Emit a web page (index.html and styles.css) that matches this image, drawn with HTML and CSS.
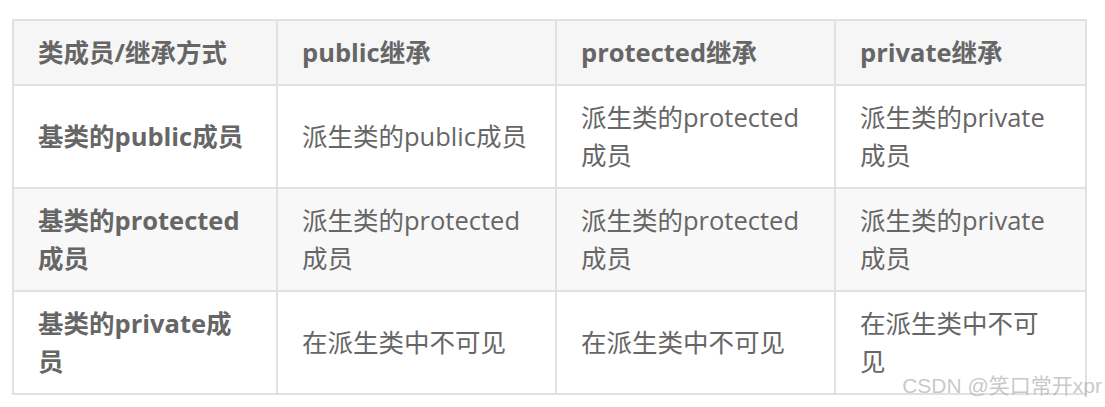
FILE: index.html
```html
<!DOCTYPE html>
<html lang="zh">
<head>
<meta charset="utf-8">
<link rel="stylesheet" href="styles.css">
</head>
<body>
<div class="page">
  <table class="grid">
    <colgroup>
      <col class="c1"><col class="c2"><col class="c3"><col class="c4">
    </colgroup>
    <thead>
      <tr><th>类成员/继承方式</th><th>public继承</th><th>protected继承</th><th>private继承</th></tr>
    </thead>
    <tbody>
      <tr><td class="key">基类的public成员</td><td>派生类的public成员</td><td>派生类的protected成员</td><td>派生类的private成员</td></tr>
      <tr class="alt"><td class="key">基类的protected成员</td><td>派生类的protected成员</td><td>派生类的protected成员</td><td>派生类的private成员</td></tr>
      <tr><td class="key">基类的private成员</td><td>在派生类中不可见</td><td>在派生类中不可见</td><td>在派生类中不可见</td></tr>
    </tbody>
  </table>
  <div class="mark">CSDN @笑口常开xpr</div>
</div>
</body>
</html>
```

FILE: styles.css
```css
html, body {
  margin: 0;
  padding: 0;
  background: #ffffff;
}
.page {
  position: relative;
  width: 1105px;
  height: 407px;
  padding: 19px 0 0 12px;
  box-sizing: border-box;
  font-family: "Open Sans", "Noto Sans CJK SC", sans-serif;
  color: #666666;
}
.grid {
  border-collapse: collapse;
  table-layout: fixed;
  width: 1073px;
  font-size: 25.5px;
  line-height: 38.5px;
}
.c1 { width: 264px; }
.c2 { width: 279px; }
.c3 { width: 279px; }
.c4 { width: 251px; }
.grid th, .grid td {
  border: 2px solid #dfe2e5;
  padding: 12px 26px 12px 24px;
  text-align: left;
  vertical-align: middle;
}
.grid th {
  background: #f6f6f6;
  font-weight: 700;
}
.grid td.key {
  font-weight: 700;
}
.grid tr.alt td {
  background: #f8f8f8;
}
.mark {
  position: absolute;
  right: 3px;
  bottom: 13px;
  font-family: "Liberation Sans", "Noto Sans CJK SC", sans-serif;
  font-size: 21px;
  line-height: 16px;
  color: rgba(170, 170, 170, 0.65);
  white-space: nowrap;
}
```
